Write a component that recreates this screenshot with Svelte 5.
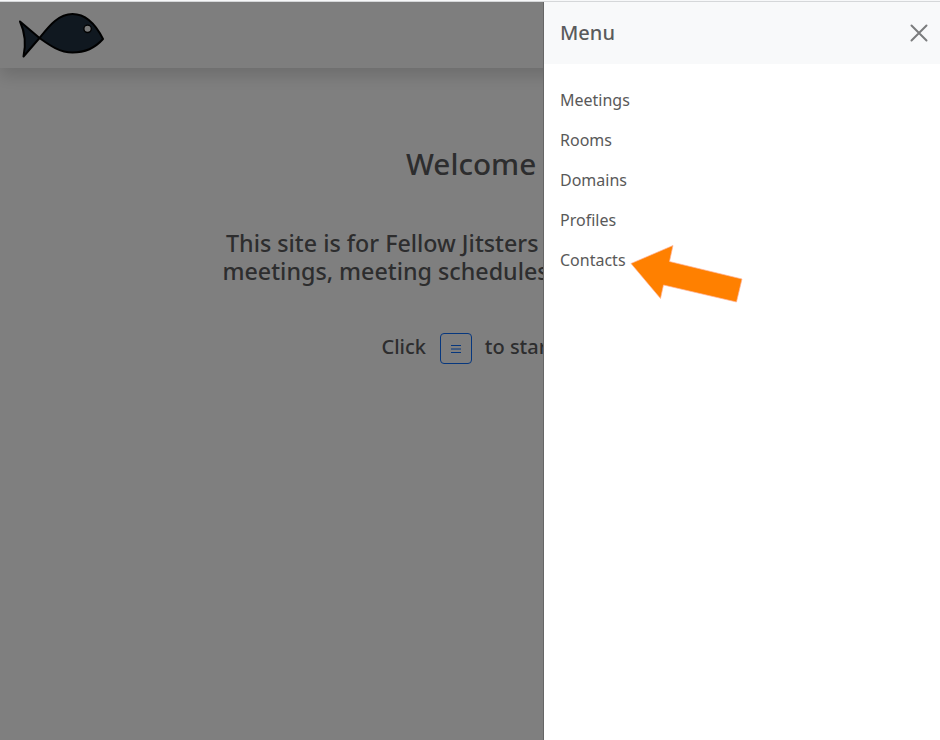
<script>
  const links = ['Meetings', 'Rooms', 'Domains', 'Profiles', 'Contacts'];
</script>

<div class="window">
  <main class="page">
    <header class="navbar">
      <svg class="logo" width="92" height="52" viewBox="0 0 92 52" aria-label="Fish logo">
        <g fill="#203040" stroke="#000" stroke-width="2" stroke-linejoin="round">
          <path d="M5 10.500 L24.500 27 L8.500 45.500 Q12.500 27 5 10.500Z" />
          <path d="M24.500 27 C32 18 42 3 57.500 3 C71 3 81 14 88 28 C80 37 70 41.500 57.500 41.500 C44 41.500 33 33 24.500 27Z" />
        </g>
        <circle cx="72.600" cy="17.800" r="3.700" fill="#fff" fill-opacity=".95" stroke="#000" stroke-width="1.300" />
      </svg>
    </header>
    <h1>Welcome</h1>
    <h2><span class="first">This site is for Fellow Jitsters</span><span>meetings, meeting schedules</span></h2>
    <p class="start">
      <span class="label">Click</span>
      <button aria-label="Open menu">
        <svg width="12" height="10" viewBox="0 0 12 10"><path d="M1 1.500h10M1 5h10M1 8.500h10" stroke="#0d6efd" stroke-width="1" /></svg>
      </button>
      <span class="label">to start</span>
    </p>
  </main>
  <div class="backdrop"></div>
  <aside class="drawer">
    <div class="head">
      <h5>Menu</h5>
      <svg width="18" height="18" viewBox="0 0 18 18" aria-label="Close"><path d="M1.500 1.500l15 15M16.500 1.500l-15 15" stroke="#7b7c7d" stroke-width="2" stroke-linecap="round" /></svg>
    </div>
    <nav>
      {#each links as link}
        <a href="#{link}">{link}</a>
      {/each}
    </nav>
  </aside>
  <svg class="arrow" width="114" height="60" viewBox="0 0 114 60"><path d="M2 20.500L44 2.500L40.500 18.500L113 36L107.500 59L34.500 42L31.500 55.500Z" fill="#ff8000" stroke="#ffb39b" stroke-width=".7" /></svg>
</div>

<style>
  :global(body) { margin: 0; background: #fff; }
  .window {
    position: relative;
    box-sizing: border-box;
    width: 940px;
    height: 740px;
    overflow: hidden;
    border-top: 1px solid #f7f8f9;
    font-family: "Noto Sans", sans-serif;
    color: #5a5b5d;
  }
  .window::before { content: ""; display: block; height: 1px; background: #d5d7d9; }
  .page { height: 738px; overflow: hidden; background: #fff; white-space: nowrap; }
  .navbar {
    height: 66px;
    box-sizing: border-box;
    padding: 9px 15px;
    background: #fcfcfd;
    box-shadow: 0 8px 16px rgba(0, 0, 0, .15);
  }
  .logo { display: block; }
  h1, h2, h5, p { margin: 0; font-weight: 500; }
  h1 { padding: 78px 0 0 406px; font-size: 29.700px; line-height: 36px; }
  h2 { padding: 47px 0 0 222.500px; font-size: 23.250px; line-height: 28px; }
  h2 span { display: block; }
  h2 .first { padding-left: 3.500px; }
  .start { display: flex; align-items: center; padding: 48px 0 0 381.500px; font-size: 20px; line-height: 24px; }
  .label { padding-bottom: 4px; }
  button {
    display: grid;
    place-items: center;
    box-sizing: border-box;
    width: 32px;
    height: 31px;
    margin: 0 13px 0 13.800px;
    padding: 1px 0 0;
    border: 1px solid #0d6efd;
    border-radius: 4px;
    background: none;
  }
  .backdrop { position: absolute; inset: 1px 0 0; background: rgba(0, 0, 0, .5); }
  .drawer {
    position: absolute;
    top: 1px;
    right: 0;
    bottom: 0;
    width: 396px;
    border-left: 1px solid #666;
    background: #fff;
  }
  .head {
    display: flex;
    align-items: center;
    justify-content: space-between;
    height: 62px;
    box-sizing: border-box;
    padding: 0 12px 0 16px;
    background: #f8f9fa;
  }
  h5 { font-size: 20px; line-height: 30px; }
  nav { display: flex; flex-direction: column; padding: 16px; }
  a { padding: 8px 0; color: #595959; font-size: 16px; line-height: 24px; text-decoration: none; }
  .arrow { position: absolute; left: 628.500px; top: 241.500px; }
</style>
